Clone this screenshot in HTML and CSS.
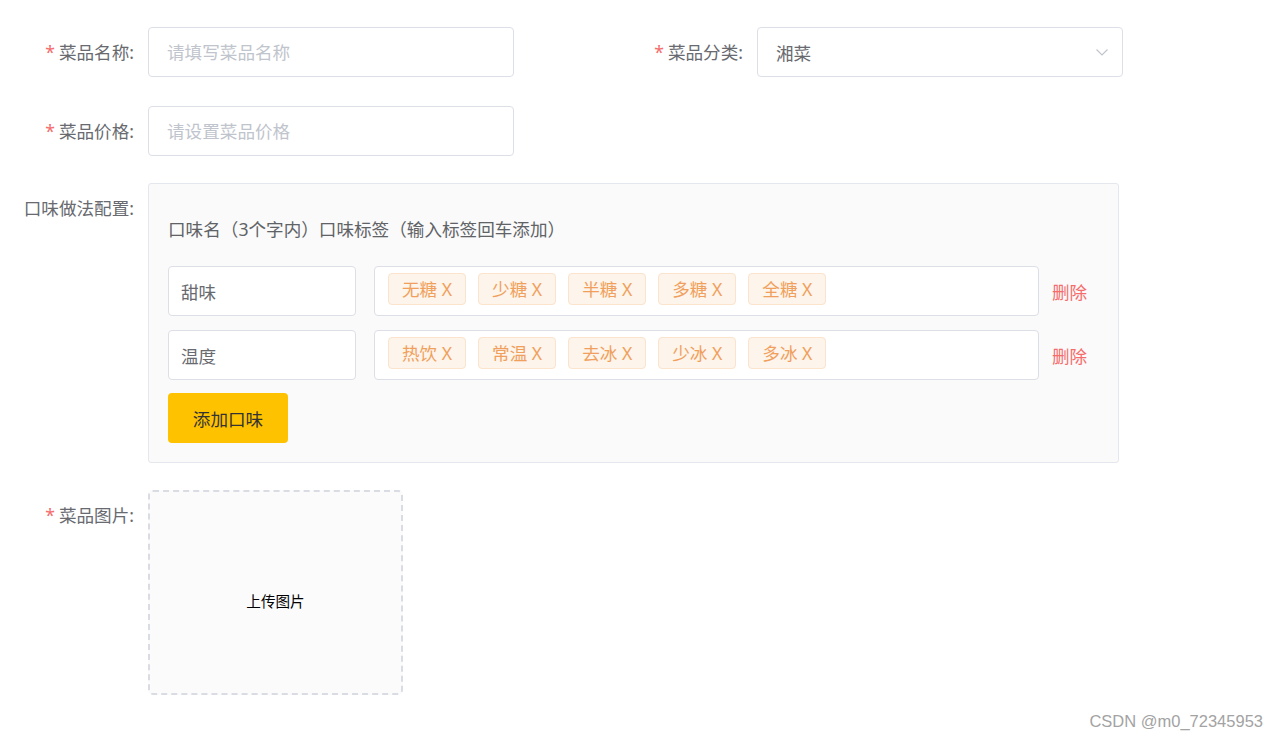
FILE: index.html
```html
<!DOCTYPE html>
<html lang="zh-CN">

<head>
    <meta charset="UTF-8">
    <meta name="viewport" content="width=device-width, initial-scale=1.0">
    <title>添加菜品</title>
    <link rel="stylesheet" href="styles.css">
</head>

<body>
    <form class="dish-form">
        <div class="form-row first">
            <div class="form-item half">
                <label class="form-label required">菜品名称:</label>
                <input class="form-input" type="text" placeholder="请填写菜品名称">
            </div>
            <div class="form-item">
                <label class="form-label required">菜品分类:</label>
                <div class="form-select">
                    <span class="select-value">湘菜</span>
                    <svg class="select-arrow" width="14" height="14" viewBox="0 0 14 14">
                        <path d="M1.5 4.5 L7 10 L12.5 4.5" fill="none" stroke="#c0c4cc" stroke-width="1.2" />
                    </svg>
                </div>
            </div>
        </div>

        <div class="form-row">
            <div class="form-item">
                <label class="form-label required">菜品价格:</label>
                <input class="form-input" type="text" placeholder="请设置菜品价格">
            </div>
        </div>

        <div class="form-row">
            <div class="form-item">
                <label class="form-label">口味做法配置:</label>
                <div class="flavor-box">
                    <div class="flavor-head">口味名（3个字内）口味标签（输入标签回车添加）</div>

                    <div class="flavor-row">
                        <input class="flavor-name" type="text" value="甜味">
                        <div class="flavor-tags">
                            <span class="tag">无糖 X</span>
                            <span class="tag">少糖 X</span>
                            <span class="tag">半糖 X</span>
                            <span class="tag">多糖 X</span>
                            <span class="tag">全糖 X</span>
                        </div>
                        <span class="flavor-del">删除</span>
                    </div>

                    <div class="flavor-row">
                        <input class="flavor-name" type="text" value="温度">
                        <div class="flavor-tags">
                            <span class="tag">热饮 X</span>
                            <span class="tag">常温 X</span>
                            <span class="tag">去冰 X</span>
                            <span class="tag">少冰 X</span>
                            <span class="tag">多冰 X</span>
                        </div>
                        <span class="flavor-del">删除</span>
                    </div>

                    <button class="add-btn" type="button">添加口味</button>
                </div>
            </div>
        </div>

        <div class="form-row">
            <div class="form-item">
                <label class="form-label required">菜品图片:</label>
                <div class="upload-box">上传图片</div>
            </div>
        </div>
    </form>

    <div class="watermark">CSDN @m0_72345953</div>
</body>

</html>
```

FILE: styles.css
```css
body {
    margin: 0;
    background: #fff;
    font-family: "Noto Sans", "Noto Sans CJK SC", sans-serif;
    color: #606266;
}

.dish-form {
    padding-top: 27px;
}

.form-row {
    display: flex;
    margin-bottom: 27px;
}

.form-row.first {
    margin-bottom: 29px;
}

.form-item {
    display: flex;
    align-items: flex-start;
}

.form-item.half {
    width: 609px;
}

.form-label {
    width: 134px;
    padding-right: 14px;
    text-align: right;
    font-size: 17.6px;
    line-height: 50px;
    color: #686a70;
    flex-shrink: 0;
}

.form-label.required::before {
    content: "*";
    color: #f56c6c;
    margin-right: 4px;
}

.form-input,
.form-select {
    box-sizing: border-box;
    width: 366px;
    height: 50px;
    border: 1px solid #dcdfe6;
    border-radius: 4px;
    padding: 0 18px;
    font-family: inherit;
    font-size: 17.6px;
    color: #686a70;
    outline: none;
    background: #fff;
}

.form-input::placeholder {
    color: #c0c4cc;
}

.form-select {
    display: flex;
    align-items: center;
    justify-content: space-between;
    padding-right: 13px;
}

/* flavor config */
.flavor-box {
    box-sizing: border-box;
    width: 971px;
    background: #fafafa;
    border: 1px solid #e4e7ed;
    border-radius: 3px;
    padding: 19px;
}

.flavor-head {
    font-size: 17.6px;
    line-height: 52px;
    color: #606266;
    margin-bottom: 11px;
}

.flavor-row {
    display: flex;
    align-items: center;
    margin-bottom: 14px;
}

.flavor-row:last-of-type {
    margin-bottom: 13px;
}

.flavor-name {
    box-sizing: border-box;
    width: 188px;
    height: 50px;
    border: 1px solid #dcdfe6;
    border-radius: 4px;
    padding: 0 12px;
    font-family: inherit;
    font-size: 17.6px;
    color: #686a70;
    outline: none;
    margin-right: 18px;
}

.flavor-tags {
    box-sizing: border-box;
    width: 665px;
    height: 50px;
    border: 1px solid #dcdfe6;
    border-radius: 4px;
    background: #fff;
    padding: 6px 13px 0;
    display: flex;
    align-items: flex-start;
    gap: 12px;
}

.tag {
    box-sizing: border-box;
    height: 32px;
    line-height: 30px;
    padding: 0 13px;
    font-size: 17.6px;
    color: #f0a05c;
    background: #fdf4eb;
    border: 1px solid #fbe3cc;
    border-radius: 4px;
}

.flavor-del {
    margin-left: 13px;
    font-size: 17.6px;
    color: #f56c6c;
    cursor: pointer;
}

.add-btn {
    width: 120px;
    height: 50px;
    border: none;
    border-radius: 4px;
    background: #ffc200;
    font-family: inherit;
    font-size: 17.6px;
    color: #333;
    cursor: pointer;
}

/* upload */
.upload-box {
    box-sizing: border-box;
    width: 255px;
    height: 205px;
    border: 2px dashed #d9dce2;
    border-radius: 5px;
    background: #fbfbfc;
    padding-top: 16px;
    display: flex;
    align-items: center;
    justify-content: center;
    font-size: 14.6px;
    color: #000;
}

.watermark {
    position: absolute;
    right: 15px;
    bottom: 8px;
    font-family: "Liberation Sans", sans-serif;
    font-size: 16.5px;
    color: #a3a3a3;
}
```
